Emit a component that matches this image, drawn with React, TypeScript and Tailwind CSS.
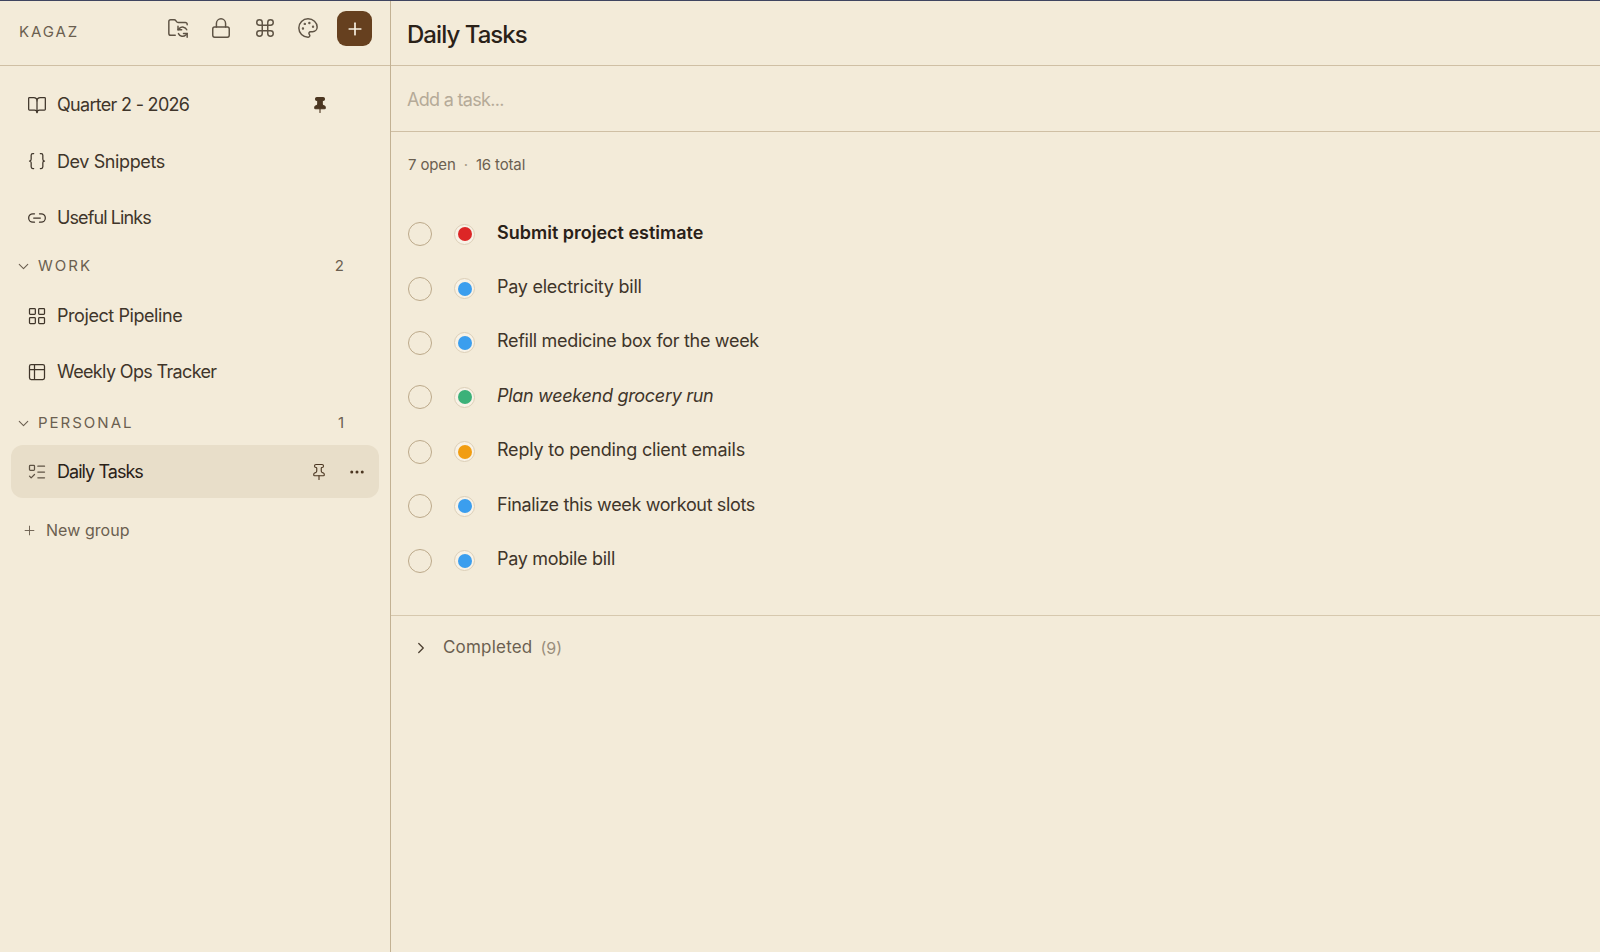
import {
  BookOpen,
  Braces,
  ChevronDown,
  ChevronRight,
  Command,
  Ellipsis,
  FolderSync,
  LayoutGrid,
  Link2,
  ListTodo,
  Lock,
  Palette,
  Pin,
  Plus,
  Table2,
} from "lucide-react";
import type { ReactNode } from "react";

function NavItem({
  icon,
  label,
  tracking,
  children,
}: {
  icon: ReactNode;
  label: string;
  tracking: string;
  children?: ReactNode;
}) {
  return (
    <div className="mx-[11px] flex h-[53px] items-center gap-[10px] rounded-xl pl-[16px] pr-[13px] text-[#3f352a]">
      {icon}
      <span className={`flex-1 text-[18px] ${tracking}`}>{label}</span>
      {children}
    </div>
  );
}

function GroupHeader({ label, count }: { label: string; count: number }) {
  return (
    <div className="flex h-6 items-center pl-[15px] pr-[46px] text-[#6b5f50]">
      <ChevronDown size={17} strokeWidth={1.5} />
      <span className="ml-[6px] flex-1 text-[15px] tracking-[2px]">{label}</span>
      <span className="text-[15px]">{count}</span>
    </div>
  );
}

const tasks = [
  { title: "Submit project estimate", dot: "bg-[#dc2626]", text: "font-semibold tracking-[0px] text-[#2a2118]" },
  { title: "Pay electricity bill", dot: "bg-[#3b9eee]", text: "tracking-[-0.25px]" },
  { title: "Refill medicine box for the week", dot: "bg-[#3b9eee]", text: "tracking-[-0.3px]" },
  { title: "Plan weekend grocery run", dot: "bg-[#3cb179]", text: "italic tracking-[-0.3px]" },
  { title: "Reply to pending client emails", dot: "bg-[#f19d12]", text: "tracking-[-0.2px]" },
  { title: "Finalize this week workout slots", dot: "bg-[#3b9eee]", text: "tracking-[-0.36px]" },
  { title: "Pay mobile bill", dot: "bg-[#3b9eee]", text: "tracking-[-0.3px]" },
];

export default function App() {
  return (
    <div className="flex h-screen flex-col overflow-hidden bg-[#f3ebd9] font-['Inter',sans-serif] text-[#3f352a]">
      <div className="h-px bg-[#3f4460]" />
      <div className="flex flex-1">
        <aside className="w-[391px] shrink-0 border-r border-[#c2b193]">
          <div className="flex h-[65px] items-center border-b border-[#cfbfa4] pb-[9px] pl-[19px] pr-[18px]">
            <span className="flex-1 pt-[7px] text-[15px] tracking-[1.9px] text-[#6b5f50]">KAGAZ</span>
            <div className="mb-[2px] flex items-center gap-[21.5px] text-[#5e5344]">
              <FolderSync size={22} strokeWidth={1.6} />
              <Lock size={22} strokeWidth={1.6} />
              <Command size={22} strokeWidth={1.6} />
              <Palette size={22} strokeWidth={1.6} />
            </div>
            <div className="ml-[18px] flex h-[35px] w-[35px] items-center justify-center rounded-[9px] bg-[#66401f] text-[#f8f1e3]">
              <Plus size={20} strokeWidth={2} />
            </div>
          </div>

          <div className="pt-[12px]">
            <NavItem icon={<BookOpen size={20} strokeWidth={1.5} />} label="Quarter 2 - 2026" tracking="tracking-[-0.7px]">
              <Pin size={18} strokeWidth={1.5} fill="currentColor" className="mr-[37px] text-[#4b3621]" />
            </NavItem>
            <div className="h-[3.5px]" />
            <NavItem icon={<Braces size={20} strokeWidth={1.5} />} label="Dev Snippets" tracking="tracking-[-0.4px]" />
            <div className="h-[3.5px]" />
            <NavItem icon={<Link2 size={20} strokeWidth={1.5} />} label="Useful Links" tracking="tracking-[-0.9px]" />
          </div>

          <div className="mt-[10px]">
            <GroupHeader label="WORK" count={2} />
          </div>
          <div className="mt-[11px]">
            <NavItem icon={<LayoutGrid size={20} strokeWidth={1.5} />} label="Project Pipeline" tracking="tracking-[-0.43px]" />
            <div className="h-[3px]" />
            <NavItem icon={<Table2 size={20} strokeWidth={1.5} />} label="Weekly Ops Tracker" tracking="tracking-[-0.65px]" />
          </div>

          <div className="mt-[13px]">
            <GroupHeader label="PERSONAL" count={1} />
          </div>
          <div className="mt-[10px]">
            <div className="mx-[11px] flex h-[53px] items-center gap-[10px] rounded-xl bg-[#e8dec9] pl-[16px] pr-[13px] text-[#2a2118]">
              <ListTodo size={20} strokeWidth={1.5} className="text-[#5e5344]" />
              <span className="flex-1 text-[18px] tracking-[-0.95px]">Daily Tasks</span>
              <Pin size={18} strokeWidth={1.5} className="mr-[10px] text-[#4b3621]" />
              <Ellipsis size={18} strokeWidth={2} className="text-[#4b3621]" />
            </div>
          </div>

          <div className="mt-[20px] flex items-center gap-[9px] pl-[22px] text-[#6b5f50]">
            <Plus size={15} strokeWidth={1.5} />
            <span className="text-[16px] tracking-[0.05px]">New group</span>
          </div>
        </aside>

        <main className="flex-1">
          <div className="flex h-[65px] items-center border-b border-[#cfbfa4] pl-[16px] pt-1">
            <h1 className="text-[24px] font-medium tracking-[-0.95px] text-[#2a2118]">Daily Tasks</h1>
          </div>
          <div className="flex h-[66px] items-center border-b border-[#cfbfa4] pl-[16px] pt-px text-[18px] tracking-[-0.7px] text-[#b5aa98]">
            Add a task...
          </div>
          <div className="pl-[17px] pt-[22px] text-[15px] tracking-[-0.15px] text-[#6b5f50]">
            7 open <span className="mx-[4px] text-[#a89c88]">·</span> 16 total
          </div>

          <div className="mt-[30.5px] border-b border-[#d6c8ae] pb-[27.5px]">
            {tasks.map((t) => (
              <div key={t.title} className="flex h-[54.4px] items-center pl-[17px]">
                <div className="h-6 w-6 rounded-full border-[1.5px] border-[#bca98a]" />
                <div className="ml-[22px] flex h-[21px] w-[21px] items-center justify-center rounded-full border border-[#dccfb8] bg-[#f8f2e6]">
                  <div className={`h-[14px] w-[14px] rounded-full ${t.dot}`} />
                </div>
                <span className={`ml-[22px] -translate-y-[2px] text-[18px] ${t.text}`}>{t.title}</span>
              </div>
            ))}
          </div>

          <div className="flex items-center pl-[21px] pt-[19px] text-[#6b5f50]">
            <ChevronRight size={18} strokeWidth={1.75} className="text-[#4b3f31]" />
            <span className="ml-[13px] text-[17px] tracking-[0.2px]">Completed</span>
            <span className="ml-2 text-[16px] text-[#9a8e7c]">(9)</span>
          </div>
        </main>
      </div>
    </div>
  );
}
